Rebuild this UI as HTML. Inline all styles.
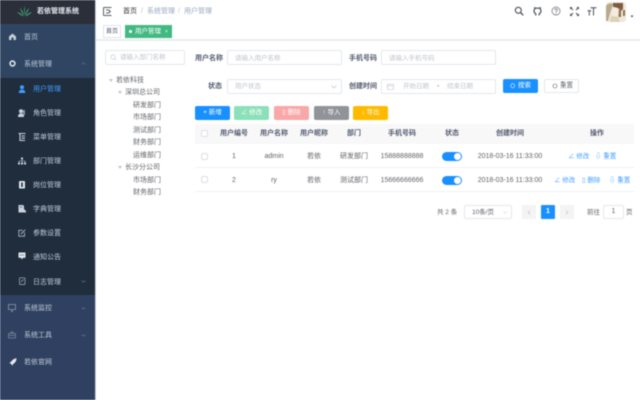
<!DOCTYPE html>
<html><head><meta charset="utf-8">
<style>
html,body{margin:0;padding:0;width:640px;height:400px;overflow:hidden;background:#fff}
#r{position:relative;width:640px;height:400px;overflow:hidden;filter:blur(.5px);font-family:"Liberation Sans","Noto Sans CJK SC",sans-serif;font-size:7px;color:#606266}
#r div,#r span.t,#r svg{position:absolute}
.t{position:absolute;white-space:nowrap;line-height:10px;margin-top:-4.300px}
.c{transform:translateX(-50%)}
.m{color:#bfcbd9}
.bx{border:1px solid #e4e7ed;border-radius:2px;box-sizing:border-box;background:#fff}
.ph{color:#c0c4cc}
.btn{border-radius:2px;height:14px;color:#fff;line-height:14px;text-align:center;font-size:6.500px;top:106px;width:35px}
.b{font-weight:bold;color:#515a6e}
.lk{color:#409eff;font-size:6.500px}
.g{color:#606266}
</style></head><body>
<div id="r">
<!-- sidebar -->
<div style="left:0;top:0;width:95px;height:400px;background:#304156"></div>
<div style="left:0;top:0;width:95px;height:24px;background:#2b2f3a"></div>
<div style="left:0;top:24px;width:95px;height:54px;background:#2f4562"></div>
<div style="left:0;top:78px;width:95px;height:217px;background:#1f2d3d"></div>
<div style="left:0;top:295px;width:95px;height:105px;background:#2f4060"></div>
<svg style="left:17px;top:6px" width="15" height="11" viewBox="0 0 15 11"><path d="M7.5 10C7 6 7 3 7.5 0 8 3 8 6 7.5 10ZM7 10C5 7 4 5 3 2 5 4 6.5 7 7 10ZM8 10C10 7 11 5 12 2 10 4 8.500 7 8 10ZM6.500 10.500C4 9 2 8 0 6 3 7 5 8 6.500 10.500ZM8.500 10.500C11 9 13 8 15 6 12 7 10 8 8.500 10.500Z" fill="#41b883"/></svg>
<span class="t" style="left:37px;top:11.500px;color:#e8ecf0;font-weight:bold;">若依管理系统</span>

<svg style="left:9px;top:33px" width="7" height="7" viewBox="0 0 7 7"><path d="M0 3.500 3.500 .5 7 3.500V7H0Z" fill="#c4ced9"/><rect x="2.500" y="4.500" width="2" height="2.500" fill="#2f4562"/></svg>
<span class="t m" style="left:24px;top:37px">首页</span>
<svg style="left:9px;top:60px" width="7" height="7" viewBox="0 0 7 7"><circle cx="3.500" cy="3.500" r="2.400" fill="none" stroke="#dfe5ec" stroke-width="1.600"/></svg>
<span class="t m" style="left:24px;top:64px">系统管理</span>
<svg style="left:81px;top:62px" width="5" height="3" viewBox="0 0 5 3"><path d="M.5 2.500 2.500 .8 4.500 2.500" fill="none" stroke="#5f7186" stroke-width=".7"/></svg>

<svg style="left:18px;top:85px" width="8" height="8" viewBox="0 0 8 8"><circle cx="4" cy="2.300" r="2" fill="#409eff"/><path d="M.8 8C.8 5.500 2 4.800 4 4.800S7.200 5.500 7.200 8Z" fill="#409eff"/></svg>
<span class="t" style="left:33px;top:89px;color:#409eff">用户管理</span>
<svg style="left:18px;top:109px" width="7" height="8" viewBox="0 0 7 8"><circle cx="3" cy="2.300" r="2" fill="#c9d2dc"/><path d="M0 8C0 5.500 1 4.500 3 4.500S6 5.500 6 8Z" fill="#c9d2dc"/><rect x="5" y="1" width="2" height="5" fill="#c9d2dc" opacity=".6"/></svg>
<span class="t m" style="left:33px;top:113px">角色管理</span>
<svg style="left:18px;top:133px" width="8" height="8" viewBox="0 0 8 8"><path d="M.5 .5H7.500M2 .5V7.500H7M3.500 3H7M3.500 5.200H7" fill="none" stroke="#c9d2dc" stroke-width="1.100"/></svg>
<span class="t m" style="left:33px;top:137px">菜单管理</span>
<svg style="left:18px;top:157px" width="8" height="8" viewBox="0 0 8 8"><path d="M3 .5H5V2.500H3ZM0 5.500H2V7.500H0ZM3 5.500H5V7.500H3ZM6 5.500H8V7.500H6Z" fill="#c9d2dc"/><path d="M4 2.500V5.500M1 5.500V4H7V5.500" fill="none" stroke="#c9d2dc" stroke-width=".6"/></svg>
<span class="t m" style="left:33px;top:161px">部门管理</span>
<svg style="left:19px;top:181px" width="6" height="8" viewBox="0 0 6 8"><rect width="6" height="7.500" rx=".8" fill="#dfe5ec"/><rect x="2.200" y="1.500" width="1.600" height="4.500" fill="#1f2d3d"/></svg>
<span class="t m" style="left:33px;top:185px">岗位管理</span>
<svg style="left:18px;top:205px" width="8" height="8" viewBox="0 0 8 8"><path d="M.5 0H5L6 1V4L8 6V7.500H.5Z" fill="#c9d2dc"/><path d="M2 2H4" stroke="#1f2d3d" stroke-width=".6"/></svg>
<span class="t m" style="left:33px;top:209px">字典管理</span>
<svg style="left:18px;top:229px" width="8" height="8" viewBox="0 0 8 8"><path d="M4.500 1.300H.8V7.200H6.500V3.500" fill="none" stroke="#b5c0cc" stroke-width=".8"/><path d="M3 5 7.200 .8" stroke="#b5c0cc" stroke-width=".9"/></svg>
<span class="t m" style="left:33px;top:233px">参数设置</span>
<svg style="left:18px;top:252px" width="8" height="8" viewBox="0 0 8 8"><path d="M.5 .5H7.500V5.800H5L4 7.500 3 5.800H.5Z" fill="#e4e9ef"/><path d="M2 3H6" stroke="#1f2d3d" stroke-width=".7" stroke-dasharray="1 .6"/></svg>
<span class="t m" style="left:33px;top:257px">通知公告</span>
<svg style="left:19px;top:277px" width="7" height="8" viewBox="0 0 7 8"><rect x=".5" y=".8" width="5.500" height="6.700" rx=".5" fill="none" stroke="#aeb9c6" stroke-width=".7"/><path d="M2 5 4.500 2.500" stroke="#aeb9c6" stroke-width=".7"/></svg>
<span class="t m" style="left:33px;top:282px">日志管理</span>
<svg style="left:81px;top:280px" width="5" height="3" viewBox="0 0 5 3"><path d="M.5 .5 2.500 2.200 4.500 .5" fill="none" stroke="#5f7186" stroke-width=".7"/></svg>

<svg style="left:8px;top:304px" width="8" height="8" viewBox="0 0 8 8"><path d="M.5 .5H7.500V5.500H.5ZM3 7.500H5M4 5.500V7.500" fill="none" stroke="#8d9cae" stroke-width=".8"/></svg>
<span class="t m" style="left:24px;top:308px">系统监控</span>
<svg style="left:81px;top:307px" width="5" height="3" viewBox="0 0 5 3"><path d="M.5 .5 2.500 2.200 4.500 .5" fill="none" stroke="#67788d" stroke-width=".7"/></svg>
<svg style="left:8px;top:331px" width="8" height="8" viewBox="0 0 8 8"><path d="M.5 2.500H7.500V7H.5ZM3 2.500V1H5V2.500M.5 4.500H7.500" fill="none" stroke="#7b8ba0" stroke-width=".7"/></svg>
<span class="t m" style="left:24px;top:335px">系统工具</span>
<svg style="left:81px;top:334px" width="5" height="3" viewBox="0 0 5 3"><path d="M.5 .5 2.500 2.200 4.500 .5" fill="none" stroke="#67788d" stroke-width=".7"/></svg>
<svg style="left:9px;top:358px" width="8" height="8" viewBox="0 0 8 8"><path d="M7.500 .2C5 .5 3 2 2 4L.3 4.500 1.500 5.500 2.500 6.500 3.500 7.800 4 6C6 5 7.500 3 7.500 .2Z" fill="#e4e9ef"/></svg>
<span class="t m" style="left:24px;top:362px">若依官网</span>
<div style="left:95px;top:0;width:1px;height:400px;background:#c9ced6"></div>

<!-- navbar -->
<svg style="left:103px;top:7px" width="9" height="9" viewBox="0 0 9 9"><path d="M.5 .5H8.500M.5 8.500H8.500M.5 .5V8.500M3 3H6M3 6H6" fill="none" stroke="#5a5e66" stroke-width="1"/><path d="M6 2.500 8 4.500 6 6.500Z" fill="#5a5e66"/></svg>
<span class="t" style="left:123px;top:11.500px;color:#303133">首页</span>
<span class="t" style="left:141px;top:11.500px;color:#c0c4cc">/</span>
<span class="t" style="left:147px;top:11.500px;color:#97a8be">系统管理</span>
<span class="t" style="left:178px;top:11.500px;color:#c0c4cc">/</span>
<span class="t" style="left:184px;top:11.500px;color:#97a8be">用户管理</span>

<svg style="left:514px;top:6px" width="10" height="10" viewBox="0 0 10 10"><circle cx="4.300" cy="4.300" r="3" fill="none" stroke="#4a4f57" stroke-width="1.100"/><path d="M6.500 6.500 9.300 9.300" stroke="#4a4f57" stroke-width="1.300"/></svg>
<svg style="left:533px;top:7px" width="9" height="9" viewBox="0 0 9 9"><path d="M2.800 8.500V6.800C1.300 6 1 5 1 3.800 1 3 1.300 2.500 1.700 2L1.700 .8 3 1.300C4 1 5 1 6 1.300L7.300 .8 7.300 2C7.700 2.500 8 3 8 3.800 8 5 7.700 6 6.200 6.800V8.500" fill="none" stroke="#4a4f57" stroke-width="1.200"/></svg>
<svg style="left:551px;top:6px" width="10" height="10" viewBox="0 0 10 10"><circle cx="5" cy="5" r="4" fill="none" stroke="#6a6e75" stroke-width=".7"/><path d="M3.700 4C3.700 2.300 6.300 2.300 6.300 4 6.300 5 5 5 5 6.200M5 7V7.800" fill="none" stroke="#6a6e75" stroke-width=".8"/></svg>
<svg style="left:570px;top:7px" width="9" height="9" viewBox="0 0 9 9"><path d="M.5 .5 3 3M8.500 .5 6 3M.5 8.500 3 6M8.500 8.500 6 6" stroke="#4a4f57" stroke-width="1"/><path d="M0 0H2.500L0 2.500ZM9 0V2.500L6.500 0ZM0 9V6.500L2.500 9ZM9 9H6.500L9 6.500Z" fill="#4a4f57"/></svg>
<svg style="left:587px;top:7px" width="10" height="9" viewBox="0 0 10 9"><path d="M3.500 .7H9.500M6.500 .7V8.500M.5 3.800H4.200M2.300 3.800V8.500" fill="none" stroke="#4a4f57" stroke-width="1"/></svg>
<svg style="left:606px;top:2px" width="20" height="20" viewBox="0 0 20 20"><rect width="20" height="20" rx="3" fill="#efe8da"/><path d="M0 4C2 1 5 1 7 2 6 6 4 11 2 19H0Z" fill="#b9a98c"/><path d="M7 1H17V7L15 9C13 6 10 5 7 5Z" fill="#7d5a40"/><path d="M13 6H15V15H12.500ZM17 8H19V14H17Z" fill="#8f6f50"/><ellipse cx="9" cy="10" rx="3" ry="4" fill="#f6ebdf"/><path d="M4 20 5 14 12 15 14 20Z" fill="#d9d2b6"/></svg>
<svg style="left:630px;top:15px" width="4" height="3" viewBox="0 0 4 3"><path d="M.5 .5H3.500L2 2.500Z" fill="#4a4f57"/></svg>

<!-- tags -->
<div style="left:96px;top:39px;width:544px;height:2px;background:#e9ecef"></div>
<div style="left:103px;top:25px;width:18px;height:13px;border:1px solid #dfe4ed;box-sizing:border-box;background:#fff;color:#495060;font-size:6px;line-height:12px;text-align:center">首页</div>
<div style="left:125px;top:25px;width:47px;height:13px;background:#42b983;color:#fff;font-size:6.500px;line-height:14px"><span style="position:absolute;left:4px;top:5px;width:3px;height:3px;border-radius:50%;background:#fff"></span><span style="position:absolute;left:10px;white-space:nowrap">用户管理</span><span style="position:absolute;left:40px;font-size:5px">×</span></div>

<!-- tree -->
<div class="bx" style="left:105px;top:50px;width:80px;height:15px"></div>
<svg style="left:110px;top:54px" width="7" height="7" viewBox="0 0 7 7"><circle cx="3" cy="3" r="2.200" fill="none" stroke="#c0c4cc" stroke-width=".6"/><path d="M4.600 4.600 6.300 6.300" stroke="#c0c4cc" stroke-width=".6"/></svg>
<span class="t ph" style="left:120px;top:57px;font-size:6.500px">请输入部门名称</span>
<svg style="left:109px;top:79px" width="4" height="3" viewBox="0 0 4 3"><path d="M0 0H4L2 3Z" fill="#c0c4cc"/></svg>
<span class="t" style="left:116px;top:80px">若依科技</span>
<svg style="left:118px;top:91px" width="4" height="3" viewBox="0 0 4 3"><path d="M0 0H4L2 3Z" fill="#c0c4cc"/></svg>
<span class="t" style="left:125px;top:92.500px">深圳总公司</span>
<span class="t" style="left:133px;top:105px">研发部门</span>
<span class="t" style="left:133px;top:117.500px">市场部门</span>
<span class="t" style="left:133px;top:130px">测试部门</span>
<span class="t" style="left:133px;top:142.500px">财务部门</span>
<span class="t" style="left:133px;top:155px">运维部门</span>
<svg style="left:118px;top:166px" width="4" height="3" viewBox="0 0 4 3"><path d="M0 0H4L2 3Z" fill="#c0c4cc"/></svg>
<span class="t" style="left:125px;top:167.500px">长沙分公司</span>
<span class="t" style="left:133px;top:180px">市场部门</span>
<span class="t" style="left:133px;top:192.500px">财务部门</span>

<!-- form -->
<span class="t b" style="left:195px;top:58px">用户名称</span>
<div class="bx" style="left:227px;top:50px;width:115px;height:15px"></div>
<span class="t ph" style="left:235px;top:58px;font-size:6.500px">请输入用户名称</span>
<span class="t b" style="left:349px;top:58px">手机号码</span>
<div class="bx" style="left:381px;top:50px;width:115px;height:15px"></div>
<span class="t ph" style="left:389px;top:58px;font-size:6.500px">请输入手机号码</span>
<span class="t b" style="left:208px;top:86px">状态</span>
<div class="bx" style="left:227px;top:79px;width:115px;height:15px"></div>
<span class="t ph" style="left:235px;top:86px;font-size:6.500px">用户状态</span>
<svg style="left:331px;top:85px" width="6" height="4" viewBox="0 0 6 4"><path d="M.5 .5 3 3 5.500 .5" fill="none" stroke="#c0c4cc" stroke-width=".7"/></svg>
<span class="t b" style="left:349px;top:86px">创建时间</span>
<div class="bx" style="left:381px;top:79px;width:115px;height:15px"></div>
<svg style="left:387px;top:83px" width="7" height="7" viewBox="0 0 7 7"><path d="M.5 1.300H6.500V6.500H.5ZM.5 3H6.500" fill="none" stroke="#c0c4cc" stroke-width=".6"/></svg>
<span class="t ph" style="left:403px;top:86px;font-size:6.500px">开始日期</span>
<span class="t" style="left:437px;top:86px;color:#606266">-</span>
<span class="t ph" style="left:447px;top:86px;font-size:6.500px">结束日期</span>
<div style="left:503px;top:79px;width:35px;height:14px;background:#1890ff;border-radius:2px;color:#fff;font-size:6.500px;line-height:14px"><svg style="left:7px;top:4px" width="6" height="6" viewBox="0 0 6 6"><circle cx="2.700" cy="2.700" r="2" fill="none" stroke="#fff" stroke-width=".6"/></svg><span style="position:absolute;left:15px;white-space:nowrap">搜索</span></div>
<div class="bx" style="left:544px;top:79px;width:35px;height:14px;color:#606266;font-size:6.500px;line-height:12px"><svg style="left:7px;top:3px" width="6" height="6" viewBox="0 0 6 6"><circle cx="3" cy="3" r="2" fill="none" stroke="#606266" stroke-width=".6"/></svg><span style="position:absolute;left:15px;white-space:nowrap">重置</span></div>

<!-- buttons -->
<div class="btn" style="left:195px;background:#1890ff">+ 新增</div>
<div class="btn" style="left:234px;background:#8ce0b9">∠ 修改</div>
<div class="btn" style="left:274px;background:#f9a7a7">▯ 删除</div>
<div class="btn" style="left:314px;background:#909399">↑ 导入</div>
<div class="btn" style="left:353px;background:#ffba00">↓ 导出</div>

<!-- table -->
<div style="left:195px;top:124px;width:439px;height:20px;background:#f8f8f9"></div>
<div style="left:195px;top:167px;width:439px;height:1px;background:#eff1f4"></div>
<div style="left:195px;top:191px;width:439px;height:1px;background:#eff1f4"></div>
<div class="bx" style="left:201px;top:130px;width:7px;height:7px;border-color:#dcdfe6"></div>
<div class="bx" style="left:201px;top:153px;width:7px;height:7px;border-color:#dcdfe6"></div>
<div class="bx" style="left:201px;top:176px;width:7px;height:7px;border-color:#dcdfe6"></div>
<span class="t c b" style="left:234px;top:133px">用户编号</span>
<span class="t c b" style="left:274px;top:133px">用户名称</span>
<span class="t c b" style="left:314px;top:133px">用户昵称</span>
<span class="t c b" style="left:354px;top:133px">部门</span>
<span class="t c b" style="left:402px;top:133px">手机号码</span>
<span class="t c b" style="left:452px;top:133px">状态</span>
<span class="t c b" style="left:510px;top:133px">创建时间</span>
<span class="t c b" style="left:597px;top:133px">操作</span>

<span class="t c" style="left:234px;top:156px">1</span>
<span class="t c" style="left:274px;top:156px">admin</span>
<span class="t c" style="left:314px;top:156px">若依</span>
<span class="t c" style="left:354px;top:156px">研发部门</span>
<span class="t c" style="left:402px;top:156px">15888888888</span>
<div style="left:442px;top:152px;width:20px;height:9px;background:#1890ff;border-radius:5px"><div style="left:11.500px;top:1px;width:7px;height:7px;background:#fff;border-radius:50%"></div></div>
<span class="t c" style="left:510px;top:156px">2018-03-16 11:33:00</span>
<span class="t lk" style="left:568px;top:156px">∠ 修改</span>
<span class="t lk" style="left:595px;top:156px">⇩ 重置</span>

<span class="t c" style="left:234px;top:180px">2</span>
<span class="t c" style="left:274px;top:180px">ry</span>
<span class="t c" style="left:314px;top:180px">若依</span>
<span class="t c" style="left:354px;top:180px">测试部门</span>
<span class="t c" style="left:402px;top:180px">15666666666</span>
<div style="left:442px;top:176px;width:20px;height:9px;background:#1890ff;border-radius:5px"><div style="left:11.500px;top:1px;width:7px;height:7px;background:#fff;border-radius:50%"></div></div>
<span class="t c" style="left:510px;top:180px">2018-03-16 11:33:00</span>
<span class="t lk" style="left:554px;top:180px">∠ 修改</span>
<span class="t lk" style="left:582px;top:180px">▯ 删除</span>
<span class="t lk" style="left:609px;top:180px">⇩ 重置</span>

<!-- pagination -->
<span class="t" style="left:437px;top:212px;font-size:6.500px">共 2 条</span>
<div class="bx" style="left:464px;top:205px;width:48px;height:14px"></div>
<span class="t" style="left:472px;top:212px;font-size:6.500px">10条/页</span>
<svg style="left:503px;top:211px" width="4" height="3" viewBox="0 0 4 3"><path d="M.3 .3 2 2.300 3.700 .3" fill="none" stroke="#c0c4cc" stroke-width=".5"/></svg>
<div style="left:522px;top:205px;width:14px;height:14px;background:#f4f4f5;border-radius:1px"></div>
<svg style="left:527px;top:210px" width="4" height="5" viewBox="0 0 4 5"><path d="M3 .5 1 2.500 3 4.500" fill="none" stroke="#c0c4cc" stroke-width=".7"/></svg>
<div style="left:541px;top:205px;width:14px;height:14px;background:#1890ff;border-radius:1px;color:#fff;font-weight:bold;text-align:center;line-height:14px">1</div>
<div style="left:560px;top:205px;width:14px;height:14px;background:#f4f4f5;border-radius:1px"></div>
<svg style="left:565px;top:210px" width="4" height="5" viewBox="0 0 4 5"><path d="M1 .5 3 2.500 1 4.500" fill="none" stroke="#c0c4cc" stroke-width=".7"/></svg>
<span class="t" style="left:587px;top:212px;font-size:6.500px">前往</span>
<div class="bx" style="left:603px;top:205px;width:21px;height:14px;text-align:center;line-height:12px">1</div>
<span class="t" style="left:626px;top:212px;font-size:6.500px">页</span>
</div>
</body></html>
